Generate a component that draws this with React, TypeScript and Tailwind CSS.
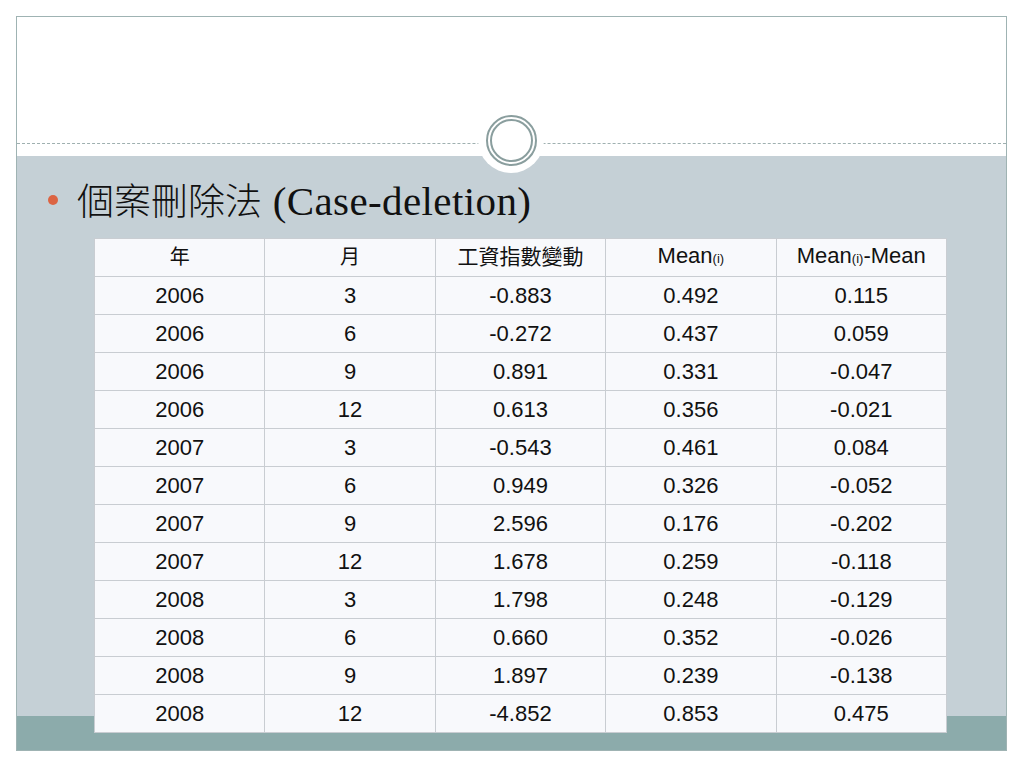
import React from "react";

const rows: [string, string, string, string, string][] = [
  ["2006", "3", "-0.883", "0.492", "0.115"],
  ["2006", "6", "-0.272", "0.437", "0.059"],
  ["2006", "9", "0.891", "0.331", "-0.047"],
  ["2006", "12", "0.613", "0.356", "-0.021"],
  ["2007", "3", "-0.543", "0.461", "0.084"],
  ["2007", "6", "0.949", "0.326", "-0.052"],
  ["2007", "9", "2.596", "0.176", "-0.202"],
  ["2007", "12", "1.678", "0.259", "-0.118"],
  ["2008", "3", "1.798", "0.248", "-0.129"],
  ["2008", "6", "0.660", "0.352", "-0.026"],
  ["2008", "9", "1.897", "0.239", "-0.138"],
  ["2008", "12", "-4.852", "0.853", "0.475"],
];

const cjk = "font-['Noto_Sans_CJK_TC',sans-serif] font-light";
const sans = "font-['Liberation_Sans',Arial,sans-serif]";

function HeadCell({ children, className = "" }: { children: React.ReactNode; className?: string }) {
  return (
    <th className={`h-[38px] border border-[#c9cdd2] font-normal text-[#111] align-middle pb-[4px] ${className}`}>
      {children}
    </th>
  );
}

export default function App() {
  return (
    <div className="w-[1024px] h-[768px] bg-white p-[16px]">
      <div className="relative w-[991px] h-[735px] border border-[#9fb3b3] flex flex-col">
        {/* title area */}
        <div className="h-[139px] bg-white flex flex-col justify-end pb-[12px]">
          <div className="border-t border-dashed border-[#9fb0b0]" />
        </div>

        {/* ring ornament */}
        <div className="absolute left-[461px] top-[90px] w-[66px] h-[66px] rounded-full bg-white flex items-center justify-center">
          <div className="w-[51px] h-[51px] rounded-full border-2 border-[#8a9e9e] flex items-center justify-center">
            <div className="w-[43px] h-[43px] rounded-full border-2 border-[#8a9e9e]" />
          </div>
        </div>

        {/* body */}
        <div className="flex-1 bg-[linear-gradient(to_bottom,#c5d0d6_calc(100%-34px),#8cabab_calc(100%-34px))] pt-[22px] pl-[31px]">
          <div className="flex items-center h-[44px]">
            <span className="w-[10px] h-[10px] rounded-full bg-[#dc6443]" />
            <span className="ml-[19px] text-[37px] leading-[44px] text-[#111] whitespace-nowrap">
              <span className={cjk}>個案刪除法</span>
              <span className="font-['Liberation_Serif','Times_New_Roman',serif] text-[41px] tracking-[0.4px]"> (Case-deletion)</span>
            </span>
          </div>

          <table className={`mt-[16px] ml-[46px] w-[853px] table-fixed border-collapse bg-[#f8f9fc] text-center ${sans} text-[22px] text-[#111]`}>
            <thead>
              <tr>
                <HeadCell className={`${cjk} text-[20px]`}>年</HeadCell>
                <HeadCell className={`${cjk} text-[20px]`}>月</HeadCell>
                <HeadCell className={`${cjk} text-[21px]`}>工資指數變動</HeadCell>
                <HeadCell className="text-[22px] pb-0">
                  Mean<span className="text-[13px]">(i)</span>
                </HeadCell>
                <HeadCell className="text-[22px] pb-0">
                  Mean<span className="text-[13px]">(i)</span>-Mean
                </HeadCell>
              </tr>
            </thead>
            <tbody>
              {rows.map((r, i) => (
                <tr key={i}>
                  {r.map((c, j) => (
                    <td key={j} className="h-[38px] border border-[#c9cdd2] p-0 align-middle">
                      {c}
                    </td>
                  ))}
                </tr>
              ))}
            </tbody>
          </table>
        </div>
      </div>
    </div>
  );
}
